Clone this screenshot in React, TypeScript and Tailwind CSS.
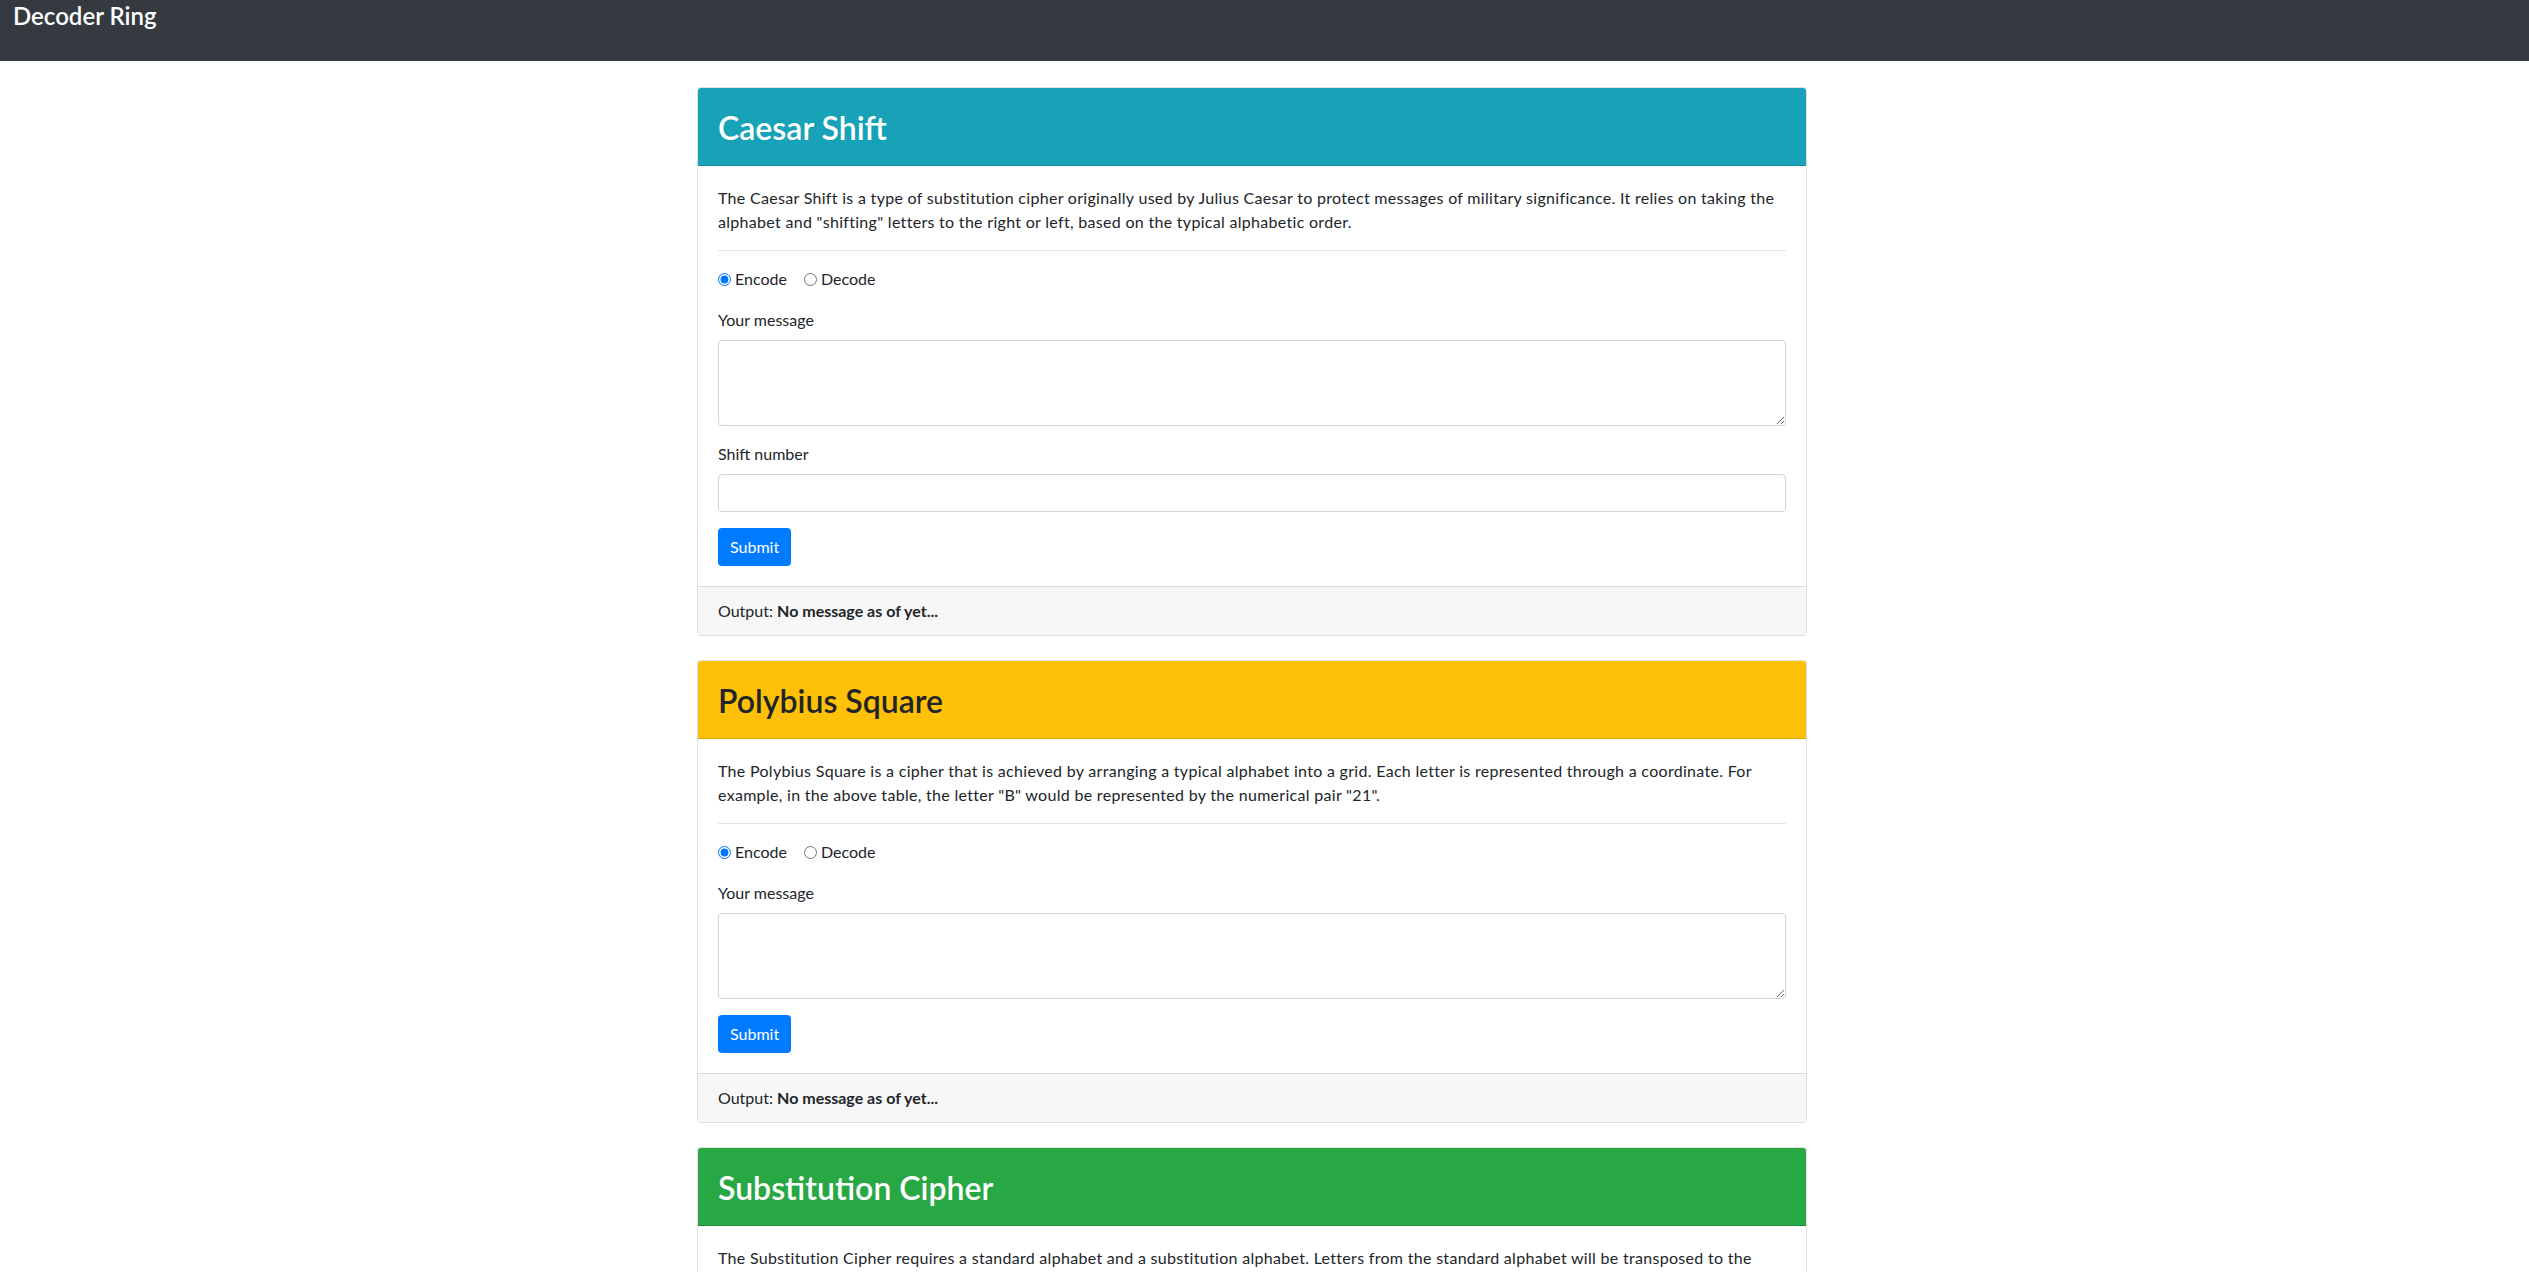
import React from "react";

type Cipher = {
  title: string;
  header: string;
  description: string;
  extraLabel?: string;
};

const ciphers: Cipher[] = [
  {
    title: "Caesar Shift",
    header: "bg-[#17a2b8] text-white",
    description:
      'The Caesar Shift is a type of substitution cipher originally used by Julius Caesar to protect messages of military significance. It relies on taking the alphabet and "shifting" letters to the right or left, based on the typical alphabetic order.',
    extraLabel: "Shift number",
  },
  {
    title: "Polybius Square",
    header: "bg-[#ffc107] text-[#212529]",
    description:
      'The Polybius Square is a cipher that is achieved by arranging a typical alphabet into a grid. Each letter is represented through a coordinate. For example, in the above table, the letter "B" would be represented by the numerical pair "21".',
  },
  {
    title: "Substitution Cipher",
    header: "bg-[#28a745] text-white",
    description:
      "The Substitution Cipher requires a standard alphabet and a substitution alphabet. Letters from the standard alphabet will be transposed to the corresponding letters in the substitution alphabet.",
    extraLabel: "Substitution alphabet",
  },
];

function CipherCard({ cipher }: { cipher: Cipher }) {
  const [mode, setMode] = React.useState("encode");
  const name = cipher.title.toLowerCase().replace(" ", "-");
  return (
    <div className="mb-6 overflow-hidden rounded border border-black/[0.125] bg-white">
      <div className={`flex h-[78px] items-center border-b border-black/[0.125] px-5 ${cipher.header}`}>
        <h2 className="pt-[3px] text-[32px] leading-[1.2] font-semibold">{cipher.title}</h2>
      </div>
      <div className="p-5">
        <p className="mb-4 leading-6 tracking-[0.3px]">{cipher.description}</p>
        <hr className="mb-4 border-t border-black/10" />
        <div className="mb-[17px] flex h-6 items-center">
          <label className="mr-[17px] flex items-center">
            <input
              type="radio"
              name={name}
              checked={mode === "encode"}
              onChange={() => setMode("encode")}
              className="m-0 mr-[4px] h-[13px] w-[13px]"
            />
            Encode
          </label>
          <label className="flex items-center">
            <input
              type="radio"
              name={name}
              checked={mode === "decode"}
              onChange={() => setMode("decode")}
              className="m-0 mr-[4px] h-[13px] w-[13px]"
            />
            Decode
          </label>
        </div>
        <div className="mb-4">
          <label className="mb-2 block leading-6">Your message</label>
          <textarea className="block h-[86px] w-full rounded border border-[#ced4da] px-3 py-1.5 outline-none" />
        </div>
        {cipher.extraLabel && (
          <div className="mb-4">
            <label className="mb-2 block leading-6">{cipher.extraLabel}</label>
            <input type="text" className="block h-[38px] w-full rounded border border-[#ced4da] px-3 outline-none" />
          </div>
        )}
        <button type="submit" className="h-[38px] rounded bg-[#007bff] px-3 leading-6 text-white">
          Submit
        </button>
      </div>
      <div className="border-t border-black/[0.125] bg-[#f7f7f7] px-5 py-3 leading-6">
        Output: <strong className="font-bold">No message as of yet...</strong>
      </div>
    </div>
  );
}

export default function App() {
  return (
    <div className="min-h-screen bg-white font-['Lato','Liberation_Sans',sans-serif] text-base text-[#212529]">
      <nav className="h-[61px] bg-[#343a40] pl-[13px] pt-[1px]">
        <span className="text-[24px] leading-[29px] font-semibold text-white">Decoder Ring</span>
      </nav>
      <main className="pt-[26px] pl-[697px]">
        <div className="w-[1110px]">
          {ciphers.map((cipher) => (
            <CipherCard key={cipher.title} cipher={cipher} />
          ))}
        </div>
      </main>
    </div>
  );
}
